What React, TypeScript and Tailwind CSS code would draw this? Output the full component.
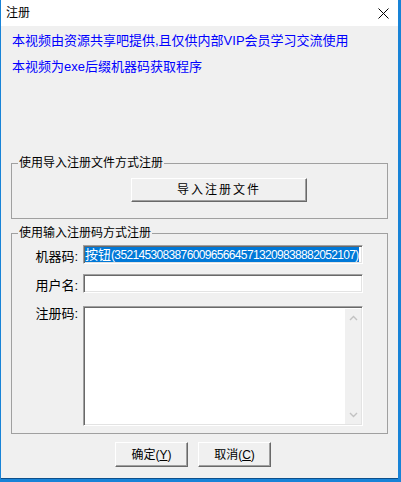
const ui = "font-['Liberation_Sans','Noto_Sans_CJK_SC',sans-serif]";

const raised =
  'bg-[#f0f0f0] border border-t-white border-l-white border-r-[#696969] border-b-[#696969] shadow-[inset_-1px_-1px_0_#a0a0a0] text-black';
const sunken =
  'bg-white border border-t-[#a0a0a0] border-l-[#a0a0a0] border-r-white border-b-white shadow-[inset_1px_1px_0_#696969,inset_-1px_-1px_0_#e3e3e3]';

function Chevron({ down }: { down?: boolean }) {
  return (
    <svg width="9" height="6" viewBox="0 0 9 6" className={down ? 'rotate-180' : ''}>
      <path d="M1 5 L4.5 1.5 L8 5" fill="none" stroke="#c2c2c2" strokeWidth="1.4" />
    </svg>
  );
}

export default function App() {
  return (
    <div className="w-[401px] h-[482px] bg-[#1883d7] pl-px pr-[3px] pb-[3px] flex flex-col">
      <div className={`flex-1 flex flex-col bg-[#f0f0f0] border-b border-[#0d4f8b] ${ui}`}>
        {/* 标题栏 */}
        <div className="h-[26px] bg-white flex items-center justify-between pl-[5px] pr-[9px]">
          <span className="text-[12px] leading-none text-black">注册</span>
          <svg width="11" height="11" viewBox="0 0 11 11">
            <path d="M0.5 0.5 L10.5 10.5 M10.5 0.5 L0.5 10.5" stroke="#000" strokeWidth="1" />
          </svg>
        </div>

        <div className="flex-1 flex flex-col pt-[7px] pb-[11px]">
          <p className="pl-[11px] text-[13px] leading-[16px] text-[#0000ff]">
            本视频由资源共享吧提供,且仅供内部VIP会员学习交流使用
          </p>
          <p className="pl-[11px] mt-[10px] text-[13px] leading-[16px] text-[#0000ff]">
            本视频为exe后缀机器码获取程序
          </p>

          {/* 导入注册文件 */}
          <fieldset className="mt-[80px] ml-[10px] w-[377px] border border-[#a0a0a0] px-[6px] pt-[7px] pb-[16px]">
            <legend className="px-px text-[12px] leading-[16px] text-black">使用导入注册文件方式注册</legend>
            <div className="flex">
              <button
                className={`ml-[113px] w-[176px] h-[24px] flex items-center justify-center text-[12px] tracking-[2px] leading-none ${raised}`}
              >
                导入注册文件
              </button>
            </div>
          </fieldset>

          {/* 输入注册码 */}
          <fieldset className="mt-[6px] ml-[10px] w-[377px] border border-[#a0a0a0] px-[6px] pt-[4px] pb-[7px]">
            <legend className="px-px text-[12px] leading-[16px] text-black">使用输入注册码方式注册</legend>

            <div className="flex items-end">
              <span className="w-[60px] text-right text-[13px] leading-[15px] text-black">机器码:</span>
              <div className={`ml-[5px] w-[280px] h-[19px] flex items-center overflow-hidden ${sunken}`}>
                <span className="ml-px bg-[#0078d7] text-white leading-[14px] whitespace-nowrap">
                  <span className="text-[13px]">按钮</span>
                  <span className="text-[12px] tracking-[-0.65px]">(3521453083876009656645713209838882052107)</span>
                </span>
              </div>
            </div>

            <div className="flex items-end mt-[10px]">
              <span className="w-[60px] text-right text-[13px] leading-[15px] text-black">用户名:</span>
              <div className={`ml-[5px] w-[280px] h-[19px] ${sunken}`} />
            </div>

            <div className="flex items-start mt-[13px]">
              <span className="w-[60px] text-right text-[13px] leading-[16px] text-black">注册码:</span>
              <div className={`ml-[5px] w-[280px] h-[120px] flex justify-end ${sunken}`}>
                <div className="w-[16px] mt-[2px] mb-px mr-px bg-[#f0f0f0] flex flex-col items-center justify-between py-[6px]">
                  <Chevron />
                  <Chevron down />
                </div>
              </div>
            </div>
          </fieldset>

          <div className="flex mt-[8px] pl-[114px] gap-[10px]">
            <button className={`w-[73px] h-[25px] flex items-center justify-center text-[12px] leading-none ${raised}`}>
              确定(<span className="underline">Y</span>)
            </button>
            <button className={`w-[73px] h-[25px] flex items-center justify-center text-[12px] leading-none ${raised}`}>
              取消(<span className="underline">C</span>)
            </button>
          </div>
        </div>
      </div>
    </div>
  );
}
